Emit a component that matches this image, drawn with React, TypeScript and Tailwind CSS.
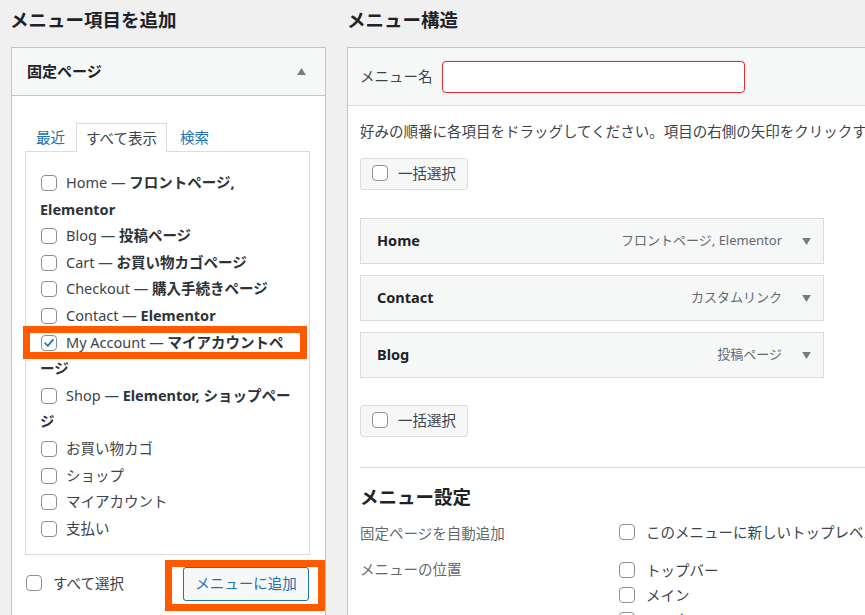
import React from "react"

const font = "font-['Noto_Sans','Noto_Sans_CJK_JP',sans-serif]"

function Check({ checked = false }: { checked?: boolean }) {
    return (
        <span className="inline-flex w-4 h-4 shrink-0 items-center justify-center rounded-[4px] border border-[#8c8f94] bg-white align-middle relative -top-[1px]">
            {checked && (
                <svg viewBox="0 0 16 16" className="w-[14px] h-[14px]">
                    <path d="M3.5 8.2 L6.6 11.2 L12.6 4.4" fill="none" stroke="#2271b1" strokeWidth="2" strokeLinecap="round" strokeLinejoin="round" />
                </svg>
            )}
        </span>
    )
}

function Triangle({ up = false }: { up?: boolean }) {
    return (
        <svg viewBox="0 0 10 8" className="w-[9px] h-[7px]">
            <path d={up ? "M5 0 L10 8 L0 8 Z" : "M0 0 L10 0 L5 8 Z"} fill="#787c82" />
        </svg>
    )
}

const pages: { name: string; state?: string }[] = [
    { name: "Home", state: "フロントページ, Elementor" },
    { name: "Blog", state: "投稿ページ" },
    { name: "Cart", state: "お買い物カゴページ" },
    { name: "Checkout", state: "購入手続きページ" },
    { name: "Contact", state: "Elementor" },
    { name: "My Account", state: "マイアカウントページ" },
    { name: "Shop", state: "Elementor, ショップページ" },
    { name: "お買い物カゴ" },
    { name: "ショップ" },
    { name: "マイアカウント" },
    { name: "支払い" },
]

const menuItems = [
    { title: "Home", type: "フロントページ, Elementor" },
    { title: "Contact", type: "カスタムリンク" },
    { title: "Blog", type: "投稿ページ" },
]

function BulkButton() {
    return (
        <div className="inline-flex items-center h-[32px] w-[108px] pl-[11px] gap-[10px] bg-[#f6f7f7] border border-[#dcdcde] rounded-[3px] text-[14.5px] text-[#3c434a]">
            <Check />
            <span>一括選択</span>
        </div>
    )
}

export default function App() {
    return (
        <div className={`w-[865px] h-[615px] overflow-hidden bg-[#f0f0f1] relative ${font}`}>
            <div className="flex pl-[10px] gap-[21px]">
                {/* left column */}
                <div className="w-[316px] shrink-0">
                    <h2 className="h-[47px] leading-[40px] text-[18.5px] font-bold text-[#1d2327]">メニュー項目を追加</h2>
                    <div className="ml-[1px] border border-[#c3c4c7] bg-white">
                        <div className="h-[48px] bg-[#f6f7f7] border-b border-[#c3c4c7] flex items-center justify-between pl-[15px] pr-[19px]">
                            <span className="text-[15px] font-bold text-[#1d2327]">固定ページ</span>
                            <Triangle up />
                        </div>
                        <div className="pl-[13px] pr-[15px] pt-[27px] pb-[40px]">
                            <div className="flex items-end h-[28px] text-[14.5px]">
                                <span className="w-[51px] text-center leading-[28px] text-[#2271b1]">最近</span>
                                <span className="w-[91px] h-[29px] -mb-[1px] text-center leading-[28px] border border-b-0 border-[#dcdcde] bg-white text-[#3c434a] relative z-10">すべて表示</span>
                                <span className="pl-[13px] leading-[28px] text-[#2271b1]">検索</span>
                            </div>
                            <ul className="border border-[#dcdcde] pl-[14px] pr-[13px] pt-[17px] pb-[13px] text-[14.5px] text-[#3c434a]">
                                {pages.map((p) => (
                                    <li key={p.name} className="leading-[26.6px]">
                                        <span className="mr-[9px] ml-[1px]">
                                            <Check checked={p.name === "My Account"} />
                                        </span>
                                        {p.name}
                                        {p.state && (
                                            <>
                                                {" — "}
                                                <b className="font-bold text-[#2c3338]">{p.state}</b>
                                            </>
                                        )}
                                    </li>
                                ))}
                            </ul>
                            <div className="mt-[12px] flex items-center justify-between pl-[1px] pr-[1px]">
                                <label className="flex items-center gap-[11px] text-[14.5px] text-[#3c434a]">
                                    <Check />
                                    すべて選択
                                </label>
                                <button className="h-[34px] w-[126px] border border-[#2271b1] rounded-[3px] bg-[#f6f7f7] text-[#2271b1] text-[14.5px]">
                                    メニューに追加
                                </button>
                            </div>
                        </div>
                    </div>
                </div>

                {/* right column */}
                <div className="w-[600px] shrink-0">
                    <h2 className="h-[47px] leading-[40px] text-[18.5px] font-bold text-[#1d2327]">メニュー構造</h2>
                    <div className="border-t border-l border-[#c3c4c7] bg-white">
                        <div className="h-[58px] bg-[#f6f7f7] border-b border-[#dcdcde] flex items-center pl-[12px] gap-[9px]">
                            <span className="text-[14.5px] text-[#3c434a]">メニュー名</span>
                            <div className="w-[303px] h-[32px] bg-white border border-[#d63638] rounded-[4px] shadow-[0_0_2px_rgba(214,54,56,0.3)]" />
                        </div>
                        <div className="pl-[12px] pt-[14px] pb-[40px] text-[#3c434a]">
                            <p className="leading-[22px] text-[14.5px] whitespace-nowrap">
                                好みの順番に各項目をドラッグしてください。項目の右側の矢印をクリックすると、追加の設定オプションが表示されます。
                            </p>
                            <div className="mt-[16px]">
                                <BulkButton />
                            </div>
                            <div className="mt-[28px] flex flex-col gap-[11px] w-[464px]">
                                {menuItems.map((m) => (
                                    <div key={m.title} className="h-[46px] bg-[#f6f7f7] border border-[#dcdcde] flex items-center pl-[16px] pr-[12px]">
                                        <span className="font-bold text-[14.5px] text-[#1d2327]">{m.title}</span>
                                        <span className="ml-auto text-[13px] text-[#646970] mr-[20px]">{m.type}</span>
                                        <Triangle />
                                    </div>
                                ))}
                            </div>
                            <div className="mt-[27px]">
                                <BulkButton />
                            </div>
                            <div className="mt-[30px] border-t border-[#dcdcde]" />
                            <h3 className="mt-[14px] leading-[30px] text-[18.5px] font-bold text-[#1d2327]">メニュー設定</h3>
                            <div className="mt-[9px] flex text-[14.5px]">
                                <span className="w-[259px] shrink-0 leading-[24px] text-[#646970]">固定ページを自動追加</span>
                                <label className="flex items-center gap-[11px] h-[24px] whitespace-nowrap">
                                    <Check />
                                    このメニューに新しいトップレベルページを自動追加
                                </label>
                            </div>
                            <div className="mt-[13px] flex text-[14.5px]">
                                <span className="w-[259px] shrink-0 leading-[22px] text-[#646970]">メニューの位置</span>
                                <div className="flex flex-col">
                                    {["トップバー", "メイン", "フッター"].map((l) => (
                                        <label key={l} className="flex items-center gap-[11px] h-[25px]">
                                            <Check />
                                            {l}
                                        </label>
                                    ))}
                                </div>
                            </div>
                        </div>
                    </div>
                </div>
            </div>

            {/* highlight overlays */}
            <div className="absolute left-[23px] top-[326px] w-[284px] h-[33px] border-[7px] border-[#ff5a00] pointer-events-none" />
            <div className="absolute left-[165px] top-[560px] w-[160px] h-[51px] border-[7px] border-[#ff5a00] pointer-events-none" />
        </div>
    )
}
